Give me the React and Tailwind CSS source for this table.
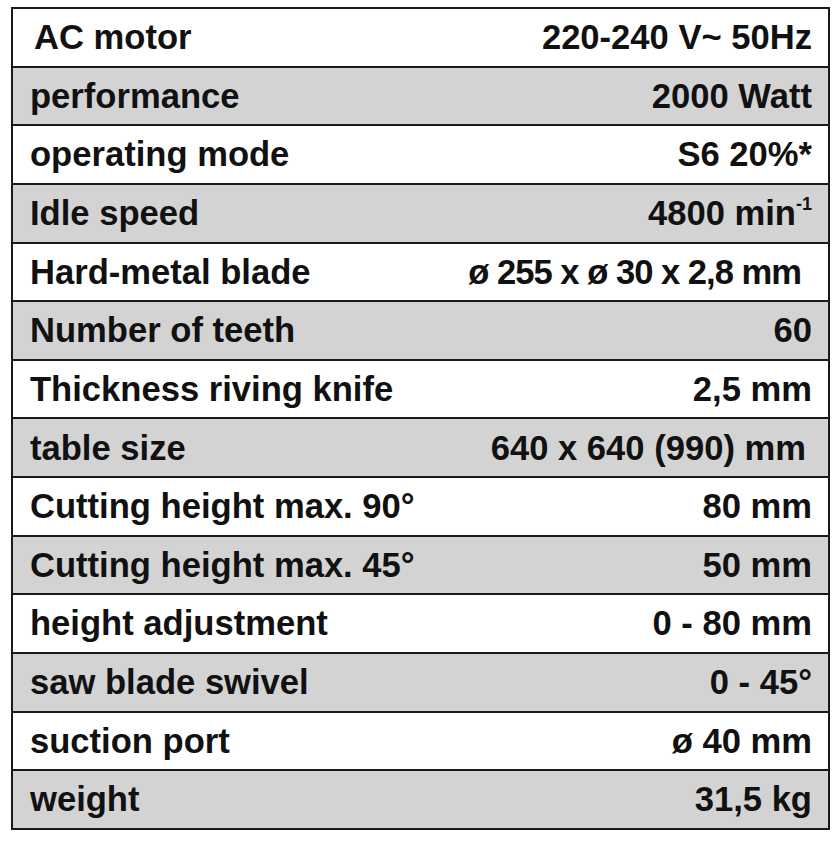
const rows = [
  { label: 'AC motor', value: '220-240 V~ 50Hz', indent: true },
  { label: 'performance', value: '2000 Watt' },
  { label: 'operating mode', value: 'S6 20%*' },
  { label: 'Idle speed', value: 'min', pre: '4800 ', sup: '-1', pr: 'pr-[16px]' },
  { label: 'Hard-metal blade', value: 'ø 255 x ø 30 x 2,8 mm', pr: 'pr-[27px]', tight: true },
  { label: 'Number of teeth', value: '60' },
  { label: 'Thickness riving knife', value: '2,5 mm' },
  { label: 'table size', value: '640 x 640 (990) mm', pr: 'pr-[22px]' },
  { label: 'Cutting height max. 90°', value: '80 mm' },
  { label: 'Cutting height max. 45°', value: '50 mm' },
  { label: 'height adjustment', value: '0 - 80 mm' },
  { label: 'saw blade swivel', value: '0 - 45°' },
  { label: 'suction port', value: 'ø 40 mm' },
  { label: 'weight', value: '31,5 kg' },
]

export default function App() {
  return (
    <div className="bg-white w-[836px] h-[844px] pt-[7px] pl-[11px]" style={{ fontFamily: '"Liberation Sans", Arial, sans-serif' }}>
      <div className="w-[819px] h-[823px] border-2 border-[#1a1a1a] flex flex-col text-[34.6px] font-bold text-[#111] leading-none">
        {rows.map((r, i) => (
          <div
            key={r.label}
            className={`flex-1 flex items-center justify-between ${i > 0 ? 'border-t-2 border-[#1a1a1a]' : ''} ${i % 2 ? 'bg-[#d3d3d3]' : 'bg-white'} ${r.indent ? 'pl-[21px]' : 'pl-[17px]'} ${r.pr || 'pr-[16px]'}`}
          >
            <span>{r.label}</span>
            <span className={r.tight ? 'tracking-[-1px]' : ''}>
              {r.pre}
              {r.value}
              {r.sup && <sup className="text-[18px] -top-[15px]">{r.sup}</sup>}
            </span>
          </div>
        ))}
      </div>
    </div>
  )
}
